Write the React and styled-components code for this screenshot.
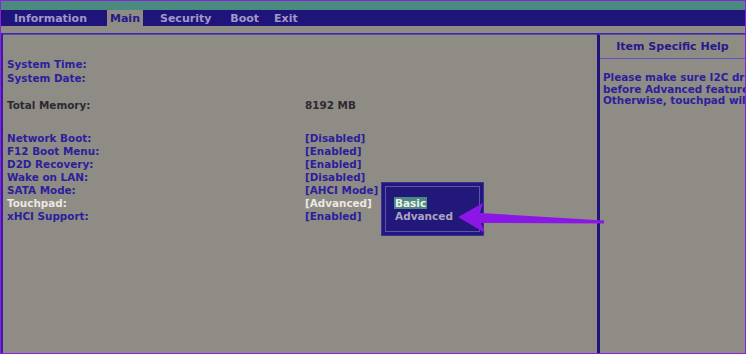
import React from "react";
import styled, { createGlobalStyle } from "styled-components";

const GlobalStyle = createGlobalStyle`
  html, body {
    margin: 0;
    padding: 0;
    background: #8f8b85;
  }
  * {
    box-sizing: border-box;
  }
`;

const Screen = styled.div`
  position: relative;
  width: 746px;
  height: 354px;
  display: flex;
  flex-direction: column;
  border: 1px solid #8a22e0;
  background: #8f8b85;
  font-family: "DejaVu Sans", Verdana, sans-serif;
  font-weight: bold;
  overflow: hidden;
`;

const TopStrip = styled.div`
  height: 9px;
  background: #4b8a7f;
`;

const MenuBar = styled.div`
  height: 16px;
  display: flex;
  align-items: stretch;
  padding-left: 10px;
  background: #1f1479;
`;

const MenuItem = styled.div`
  display: flex;
  align-items: center;
  padding: 0 3px;
  margin-left: ${(p) => p.$ml || 0}px;
  font-size: 11px;
  color: ${(p) => (p.$active ? "#261a8c" : "#a29ac8")};
  background: ${(p) => (p.$active ? "#8f8b85" : "transparent")};
`;

const Spacer = styled.div`
  height: 7px;
`;

const Panels = styled.div`
  flex: 1;
  display: flex;
  border-top: 1px solid #3b2a9c;
  border-left: 2px solid #3a1ba6;
`;

const MainPanel = styled.div`
  width: 594px;
  padding: 22px 0 0 4px;
  border-top: 1px solid #5a48b4;
`;

const HelpPanel = styled.div`
  flex: 1;
  display: flex;
  flex-direction: column;
  border-left: 3px solid #1f1479;
  border-top: 1px solid #5a48b4;
  overflow: hidden;
`;

const HelpTitle = styled.div`
  height: 24px;
  display: flex;
  align-items: center;
  justify-content: center;
  font-size: 11px;
  color: #261a8c;
  border-bottom: 1px solid #6452b8;
`;

const HelpText = styled.div`
  padding: 13px 0 0 3px;
  font-size: 10.4px;
  line-height: 11.5px;
  color: #2b1f9c;
  white-space: nowrap;
`;

const Group = styled.div`
  margin-bottom: ${(p) => p.$mb || 0}px;
`;

const Row = styled.div`
  display: grid;
  grid-template-columns: 298px auto;
  height: ${(p) => p.$h || 13}px;
  align-items: center;
  font-size: 10.4px;
  color: ${(p) =>
    p.$tone === "dark" ? "#2c2a30" : p.$tone === "light" ? "#ebe7e2" : "#2b1f9c"};
`;

const Popup = styled.div`
  position: absolute;
  left: 380px;
  top: 181px;
  width: 103px;
  height: 54px;
  padding: 3px;
  background: #211879;
  border: 1px solid #3c30a0;
`;

const PopupInner = styled.div`
  height: 100%;
  padding: 10px 0 0 8px;
  border: 1px solid #5e54ae;
  display: flex;
  flex-direction: column;
  align-items: flex-start;
  gap: 1px;
`;

const Option = styled.div`
  font-size: 10.5px;
  line-height: 12px;
  padding: 0 1px;
  color: ${(p) => (p.$selected ? "#f2f0ee" : "#aaa4c2")};
  background: ${(p) => (p.$selected ? "#4b8a7f" : "transparent")};
`;

const Arrow = styled.svg`
  position: absolute;
  left: 0;
  top: 0;
  pointer-events: none;
`;

const menu = [
  { label: "Information", ml: 0 },
  { label: "Main", ml: 17, active: true },
  { label: "Security", ml: 14 },
  { label: "Boot", ml: 13 },
  { label: "Exit", ml: 9 },
];

const settings = [
  ["Network Boot:", "[Disabled]"],
  ["F12 Boot Menu:", "[Enabled]"],
  ["D2D Recovery:", "[Enabled]"],
  ["Wake on LAN:", "[Disabled]"],
  ["SATA Mode:", "[AHCI Mode]"],
  ["Touchpad:", "[Advanced]", "light"],
  ["xHCI Support:", "[Enabled]"],
];

const App = () => {
  return (
    <>
      <GlobalStyle />
      <Screen>
        <TopStrip />
        <MenuBar>
          {menu.map((m) => (
            <MenuItem key={m.label} $ml={m.ml} $active={m.active}>
              {m.label}
            </MenuItem>
          ))}
        </MenuBar>
        <Spacer />
        <Panels>
          <MainPanel>
            <Group $mb={14}>
              <Row $h={14}>
                <span>System Time:</span>
                <span></span>
              </Row>
              <Row>
                <span>System Date:</span>
                <span></span>
              </Row>
            </Group>
            <Group $mb={20}>
              <Row $tone="dark">
                <span>Total Memory:</span>
                <span>8192 MB</span>
              </Row>
            </Group>
            <Group>
              {settings.map(([label, value, tone]) => (
                <Row key={label} $tone={tone}>
                  <span>{label}</span>
                  <span>{value}</span>
                </Row>
              ))}
            </Group>
          </MainPanel>
          <HelpPanel>
            <HelpTitle>Item Specific Help</HelpTitle>
            <HelpText>
              Please make sure I2C driver is installed
              <br />
              before Advanced feature enabled.
              <br />
              Otherwise, touchpad will not work.
            </HelpText>
          </HelpPanel>
        </Panels>
        <Popup>
          <PopupInner>
            <Option $selected>Basic</Option>
            <Option>Advanced</Option>
          </PopupInner>
        </Popup>
        <Arrow width="746" height="354" viewBox="0 0 746 354">
          <polygon
            points="457,216 482,202 479,212 603,219.5 603,222.5 480,222 484,232"
            fill="#8a17e6"
          />
        </Arrow>
      </Screen>
    </>
  );
};

export default App;
